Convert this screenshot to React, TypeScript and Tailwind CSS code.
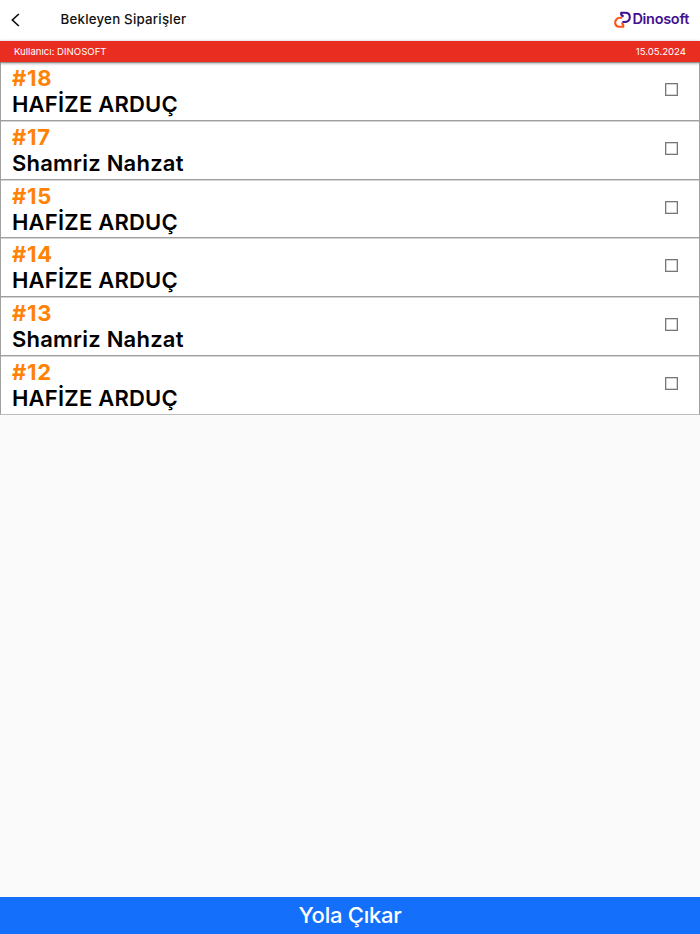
import React, { useState } from 'react';

interface Order {
  id: number;
  customer: string;
}

const orders: Order[] = [
  { id: 18, customer: 'HAFİZE ARDUÇ' },
  { id: 17, customer: 'Shamriz Nahzat' },
  { id: 15, customer: 'HAFİZE ARDUÇ' },
  { id: 14, customer: 'HAFİZE ARDUÇ' },
  { id: 13, customer: 'Shamriz Nahzat' },
  { id: 12, customer: 'HAFİZE ARDUÇ' },
];

function Logo() {
  return (
    <div className="flex items-center gap-[1px]">
      <svg width="17" height="18" viewBox="0 0 17 18" fill="none" strokeWidth="2.1" strokeLinejoin="round">
        <path d="M8.2 6.8H6C3.2 6.8 1.2 9 1.2 11.6C1.2 14.2 3 15.8 5.6 15.8H9.2C9.8 14 9 12.6 7.2 12.2" stroke="#ff5316" />
        <path d="M9.6 5.6C7.8 5 6.8 3.6 7.2 1.8H11C14 1.8 15.8 3.6 15.8 6.2C15.8 9 13.6 11 10.6 11H8.4" stroke="#43108f" />
      </svg>
      <span className="text-[14.5px] leading-none font-semibold tracking-[-0.3px] text-[#43108f]">Dinosoft</span>
    </div>
  );
}

function OrderRow({ order, checked, onToggle }: { order: Order; checked: boolean; onToggle: () => void }) {
  return (
    <label className="flex h-[58.7px] items-center justify-between border-x border-b border-[#a0a0a0] bg-white pl-[11px] pr-[21px] shadow-[inset_0_1px_0_#d4d4d4] last:border-b-[#bdbdbd]">
      <div className="text-[22px] leading-[26px]">
        <p className="font-bold text-[#ff8205] tracking-[0.8px]">#{order.id}</p>
        <p className="font-semibold text-black tracking-[0.22px]">{order.customer}</p>
      </div>
      <input
        type="checkbox"
        checked={checked}
        onChange={onToggle}
        className="mb-[3px] h-[13px] w-[13px] appearance-none border-[1.5px] border-[#777] shadow-[inset_0_0_0_0.5px_#aaa] checked:bg-[#146ffa]"
      />
    </label>
  );
}

export default function App() {
  const [selected, setSelected] = useState<number[]>([]);

  const toggle = (id: number) => {
    setSelected((prev) => (prev.includes(id) ? prev.filter((x) => x !== id) : [...prev, id]));
  };

  return (
    <div className="flex h-screen flex-col bg-[#fafafa] font-['Inter',sans-serif]">
      <header className="flex h-[41px] shrink-0 items-center bg-white pl-[11px] pr-[11px] pb-[2px]">
        <button className="w-[49.5px]" aria-label="Geri">
          <svg width="9" height="14" viewBox="0 0 9 14" fill="none" stroke="#111" strokeWidth="1.7">
            <path d="M7.8 1L1.4 7L7.8 13" />
          </svg>
        </button>
        <h1 className="flex-1 text-[13.3px] font-medium tracking-[0.22px] text-[#111]">Bekleyen Siparişler</h1>
        <Logo />
      </header>
      <div className="relative flex h-[21px] shrink-0 items-center justify-between bg-[#e92d21] px-[14px] pt-px text-[9.6px] text-white shadow-[0_1px_3px_rgba(0,0,0,0.5)]">
        <span>Kullanıcı: DINOSOFT</span>
        <span>15.05.2024</span>
      </div>
      <main className="flex-1 pt-[0.4px]">
        {orders.map((order) => (
          <OrderRow
            key={order.id}
            order={order}
            checked={selected.includes(order.id)}
            onToggle={() => toggle(order.id)}
          />
        ))}
      </main>
      <button className="h-[37px] shrink-0 bg-[#146ffa] pb-[2px] text-[22px] leading-none font-medium tracking-[-0.25px] text-white">
        Yola Çıkar
      </button>
    </div>
  );
}
